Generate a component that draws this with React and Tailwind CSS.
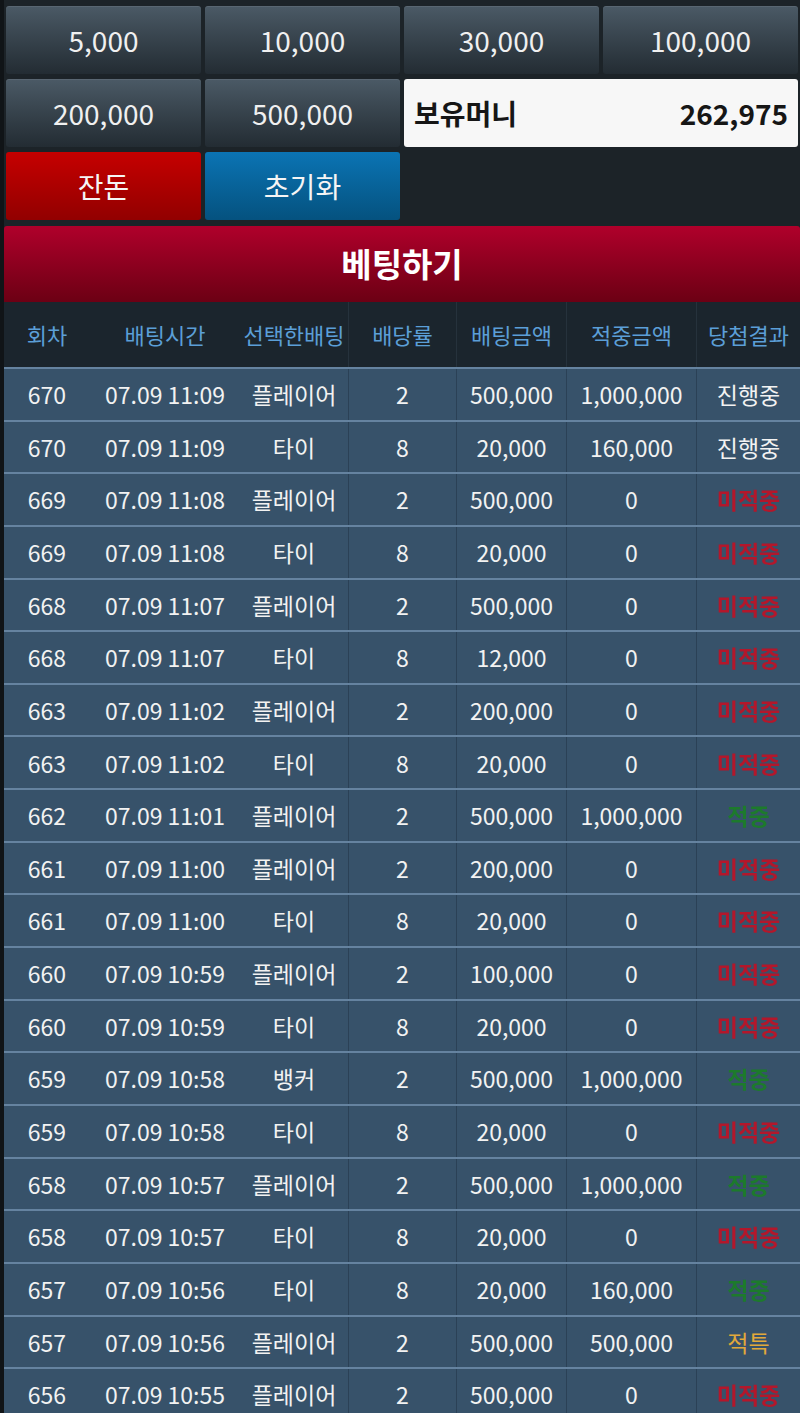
const chips = ['5,000', '10,000', '30,000', '100,000', '200,000', '500,000'];

const columns = ['회차', '배팅시간', '선택한배팅', '배당률', '배팅금액', '적중금액', '당첨결과'];

const rows = [
  ['670', '07.09 11:09', '플레이어', '2', '500,000', '1,000,000', '진행중'],
  ['670', '07.09 11:09', '타이', '8', '20,000', '160,000', '진행중'],
  ['669', '07.09 11:08', '플레이어', '2', '500,000', '0', '미적중'],
  ['669', '07.09 11:08', '타이', '8', '20,000', '0', '미적중'],
  ['668', '07.09 11:07', '플레이어', '2', '500,000', '0', '미적중'],
  ['668', '07.09 11:07', '타이', '8', '12,000', '0', '미적중'],
  ['663', '07.09 11:02', '플레이어', '2', '200,000', '0', '미적중'],
  ['663', '07.09 11:02', '타이', '8', '20,000', '0', '미적중'],
  ['662', '07.09 11:01', '플레이어', '2', '500,000', '1,000,000', '적중'],
  ['661', '07.09 11:00', '플레이어', '2', '200,000', '0', '미적중'],
  ['661', '07.09 11:00', '타이', '8', '20,000', '0', '미적중'],
  ['660', '07.09 10:59', '플레이어', '2', '100,000', '0', '미적중'],
  ['660', '07.09 10:59', '타이', '8', '20,000', '0', '미적중'],
  ['659', '07.09 10:58', '뱅커', '2', '500,000', '1,000,000', '적중'],
  ['659', '07.09 10:58', '타이', '8', '20,000', '0', '미적중'],
  ['658', '07.09 10:57', '플레이어', '2', '500,000', '1,000,000', '적중'],
  ['658', '07.09 10:57', '타이', '8', '20,000', '0', '미적중'],
  ['657', '07.09 10:56', '타이', '8', '20,000', '160,000', '적중'],
  ['657', '07.09 10:56', '플레이어', '2', '500,000', '500,000', '적특'],
  ['656', '07.09 10:55', '플레이어', '2', '500,000', '0', '미적중'],
];

// column widths (px), total 796
const widths = ['w-[86px]', 'w-[150px]', 'w-[109px]', 'w-[108px]', 'w-[110px]', 'w-[130px]', 'w-[103px]'];
// only the right-hand columns carry a divider in the original
const dividers = [false, false, true, true, true, true, false];

const resultClass = {
  진행중: 'text-[#f2f2f2]',
  미적중: 'text-[#b3172b] blur-[0.6px] font-bold',
  적중: 'text-[#1d7a2c] blur-[0.6px] font-bold',
  적특: 'text-[#e2a93a]',
};

function ChipButton({ label }) {
  return (
    <button
      type="button"
      className="h-[68px] rounded-[3px] bg-gradient-to-b from-[#4b5a66] to-[#232c33] text-[28px] text-[#f0f0f0] shadow-[inset_0_1px_0_rgba(255,255,255,0.08)]"
    >
      {label}
    </button>
  );
}

export default function App() {
  return (
    <div
      className="min-h-[1413px] w-[800px] overflow-hidden border-l-4 border-[#101417] bg-[#1c2328]"
      style={{ fontFamily: '"Noto Sans CJK KR", "Noto Sans", sans-serif' }}
    >
      <div className="grid grid-cols-4 gap-x-[4px] gap-y-[5px] px-[2px] pt-[6px]">
        {chips.map((chip) => (
          <ChipButton key={chip} label={chip} />
        ))}
        <div className="col-span-2 flex h-[68px] items-center justify-between rounded-[3px] bg-[#f7f7f7] px-[10px] text-[28px] font-bold text-[#161616]">
          <span>보유머니</span>
          <span>262,975</span>
        </div>
        <button
          type="button"
          className="h-[68px] rounded-[3px] bg-gradient-to-b from-[#c60000] to-[#920000] text-[28px] text-[#f5f5f5]"
        >
          잔돈
        </button>
        <button
          type="button"
          className="h-[68px] rounded-[3px] bg-gradient-to-b from-[#0b74b4] to-[#05527f] text-[28px] text-[#f5f5f5]"
        >
          초기화
        </button>
      </div>

      <div className="mt-[6px] flex h-[76px] items-center justify-center rounded-t-[3px] bg-gradient-to-b from-[#b0002b] to-[#6c0014] text-[33px] font-bold text-white">
        베팅하기
      </div>

      <div className="flex h-[65px] bg-[#1b252d]">
        {columns.map((col, i) => (
          <div
            key={col}
            className={`${widths[i]} flex items-center justify-center text-[22px] text-[#5b9fd7] ${dividers[i] ? 'border-r border-[#26323c]' : ''}`}
          >
            {col}
          </div>
        ))}
      </div>

      <div className="bg-[#37526a]">
        {rows.map((row, r) => (
          <div key={r} className="flex h-[52.65px] border-t-2 border-[#6583a0]">
            {row.map((cell, i) => (
              <div
                key={i}
                className={`${widths[i]} flex items-center justify-center text-[23px] ${
                  i === 6 ? resultClass[cell] : 'text-[#f2f2f2]'
                } ${dividers[i] ? 'border-r border-[#2b4156]' : ''}`}
              >
                {cell}
              </div>
            ))}
          </div>
        ))}
      </div>
    </div>
  );
}
